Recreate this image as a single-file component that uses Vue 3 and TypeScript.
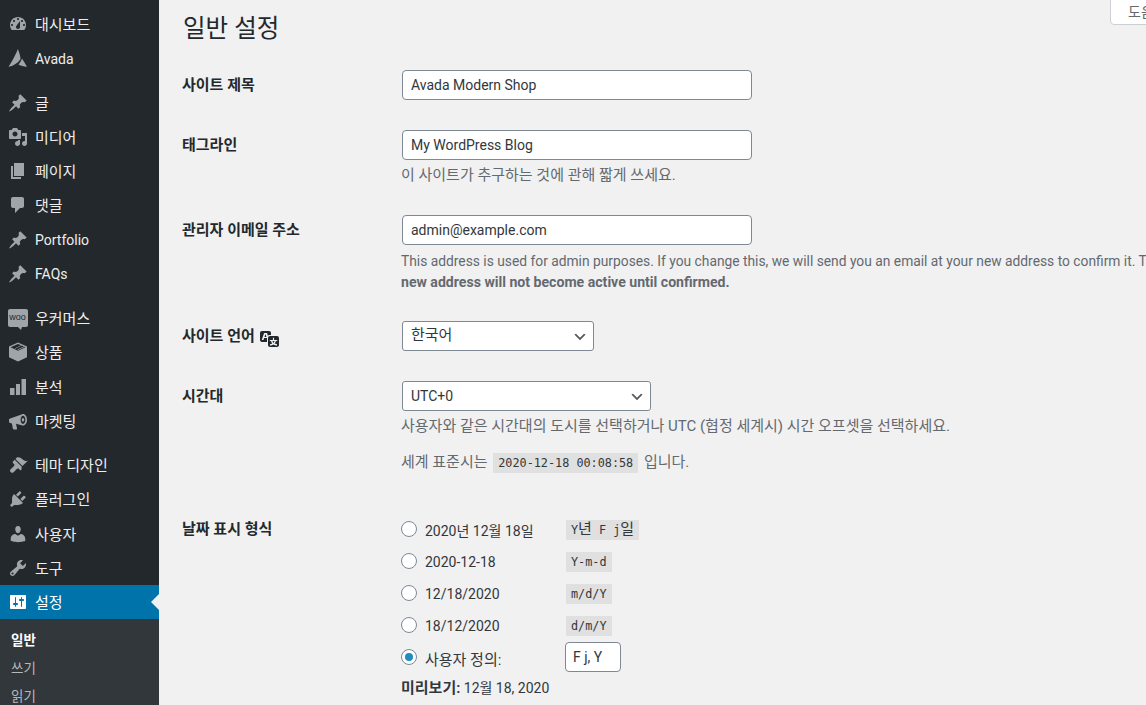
<template>
  <div class="page">
    <nav class="sidebar">
      <template v-for="item in menu" :key="item.label">
        <div class="menu-item" :class="{ active: item.active, spaced: item.spaced }">
          <span class="menu-icon">
            <span v-if="item.icon === 'woo'" class="woo-icon"><span>woo</span></span>
            <svg v-else viewBox="0 0 20 20" width="20" height="20">
              <path fill-rule="evenodd" :d="icons[item.icon]" />
            </svg>
          </span>
          <span class="menu-label" :class="isKorean(item.label) ? 'ko' : 'latin'">{{ item.label }}</span>
        </div>
      </template>
      <div class="submenu">
        <div v-for="(sub, i) in submenu" :key="sub" class="sub-item" :class="{ current: i === 0 }">{{ sub }}</div>
      </div>
    </nav>

    <main class="content">
      <div class="help-tab">도움말</div>
      <h1>일반 설정</h1>

      <div class="form-row">
        <label>사이트 제목</label>
        <div><input class="text-input" type="text" value="Avada Modern Shop" /></div>
      </div>

      <div class="form-row">
        <label>태그라인</label>
        <div>
          <input class="text-input" type="text" value="My WordPress Blog" />
          <p class="description ko">이 사이트가 추구하는 것에 관해 짧게 쓰세요.</p>
        </div>
      </div>

      <div class="form-row email-row">
        <label>관리자 이메일 주소</label>
        <div>
          <input class="text-input" type="text" value="admin@example.com" />
          <p class="description wide">
            This address is used for admin purposes. If you change this, we will send you an email at your new address to confirm it. The<br />
            <strong>new address will not become active until confirmed.</strong>
          </p>
        </div>
      </div>

      <div class="form-row">
        <label class="with-icon">사이트 언어
          <svg viewBox="0 0 20 20" width="20" height="20"><path fill-rule="evenodd" :d="icons.translation" /></svg>
        </label>
        <div><select class="select lang ko"><option>한국어</option></select></div>
      </div>

      <div class="form-row">
        <label>시간대</label>
        <div>
          <select class="select tz"><option>UTC+0</option></select>
          <p class="description ko">사용자와 같은 시간대의 도시를 선택하거나 UTC (협정 세계시) 시간 오프셋을 선택하세요.</p>
          <p class="description ko utc">세계 표준시는 <code>2020-12-18 00:08:58</code> 입니다.</p>
        </div>
      </div>

      <div class="form-row date-row">
        <label>날짜 표시 형식</label>
        <div class="date-options">
          <div v-for="opt in dateOptions" :key="opt.text" class="date-option">
            <input type="radio" name="date" class="radio" />
            <span class="date-text">{{ opt.text }}</span>
            <code><span v-for="part in splitHangul(opt.format)" :key="part" :class="{ 'code-ko': isKorean(part) }">{{ part }}</span></code>
          </div>
          <div class="date-option custom">
            <input type="radio" name="date" class="radio" checked />
            <span class="date-text ko">사용자 정의:</span>
            <input class="text-input small" type="text" value="F j, Y" />
          </div>
          <p class="preview"><strong class="ko">미리보기:</strong> 12월 18, 2020</p>
        </div>
      </div>
    </main>
  </div>
</template>

<script setup lang="ts">
interface MenuItem {
  label: string
  icon: string
  spaced?: boolean
  active?: boolean
}

const pin = 'M10.44 3.02l1.82-1.82 6.36 6.35-1.83 1.82c-1.05-.68-2.48-.57-3.41.36l-.75.75c-.92.93-1.04 2.35-.35 3.41l-1.83 1.82-2.41-2.41-2.8 2.79c-.42.42-3.38 2.71-3.8 2.29s1.86-3.39 2.28-3.81l2.79-2.79L4.1 9.36l1.83-1.82c1.05.69 2.48.57 3.4-.36l.75-.75c.93-.92 1.05-2.35.36-3.41z'

const icons: Record<string, string> = {
  dashboard: 'M3.76 16h12.48c1.1-1.37 1.76-3.11 1.76-5 0-4.42-3.58-8-8-8s-8 3.58-8 8c0 1.89.66 3.63 1.76 5zM10 4c.55 0 1 .45 1 1s-.45 1-1 1-1-.45-1-1 .45-1 1-1zM6 6c.55 0 1 .45 1 1s-.45 1-1 1-1-.45-1-1 .45-1 1-1zm8 0c.55 0 1 .45 1 1s-.45 1-1 1-1-.45-1-1 .45-1 1-1zm-5.37 5.55L12 7v6c0 1.1-.9 2-2 2s-2-.9-2-2c0-.57.24-1.08.63-1.45zM4 10c.55 0 1 .45 1 1s-.45 1-1 1-1-.45-1-1 .45-1 1-1zm12 0c.55 0 1 .45 1 1s-.45 1-1 1-1-.45-1-1 .45-1 1-1z',
  avada: 'M9.800 1C8.500 5 5 12 .5 18.800 5 18 9.500 15.500 12.300 11.500 13 10.300 11.500 5 9.800 1zM14 10.500C13 13 11.800 15 10.500 16.500 13 17.800 16 18.600 19 18.800 17.500 16 15.500 13 14 10.500z',
  pin,
  media: 'M13 11V4c0-.55-.45-1-1-1h-1.67L9 1H5L3.67 3H2c-.55 0-1 .45-1 1v7c0 .55.45 1 1 1h10c.55 0 1-.45 1-1zM7 4.5c1.38 0 2.5 1.12 2.5 2.5S8.38 9.5 7 9.5 4.5 8.38 4.5 7 5.62 4.5 7 4.5zM14 6h5v10.5c0 1.38-1.12 2.5-2.5 2.5S14 17.88 14 16.5s1.12-2.5 2.5-2.5c.17 0 .34.02.5.05V9h-3V6zm-4 8.05V13h2v3.5c0 1.38-1.12 2.5-2.5 2.5S7 17.88 7 16.5 8.12 14 9.5 14c.17 0 .34.02.5.05z',
  page: 'M6 15V2h10v13H6zm-1 1h8v2H3V5h2v11z',
  comments: 'M5 2h9c1.1 0 2 .9 2 2v7c0 1.1-.9 2-2 2h-2l-5 5v-5H5c-1.1 0-2-.9-2-2V4c0-1.1.9-2 2-2z',
  product: 'M10 .5l8.500 3.800c.3.1.5.4.5.7v9.800c0 .3-.2.6-.5.7L10 19.500 1.500 15.500c-.3-.1-.5-.4-.5-.7V5c0-.3.2-.6.5-.7zM2.500 5.200L10 8.800l7.500-3.600-.9-.4-6.600 3.100-.7-.3 6.500-3.100-2-.9L7.300 6.700l-.7-.3 6.500-3.100L10 1.900z',
  analytics: 'M18 18V2h-4.500v16H18zm-6 0V7H8v11h4zm-5.500 0v-7H2v7h4.500z',
  marketing: 'M15 3c2.300 0 4 2.600 4 5.800s-1.700 5.800-4 5.800c-.5 0-1-.1-1.400-.4L8 12.800l1 4.700c.1.500-.2 1-.8 1H5.800c-.4 0-.8-.3-.9-.7l-1-5.300-1.800-.5C1.400 11.800 1 11.100 1 10.400V9c0-.7.4-1.300 1.100-1.500L13.600 3.400c.4-.3.9-.4 1.400-.4zM15 4.700c-1.300 0-2.400 1.800-2.400 4.100s1.100 4.100 2.400 4.100 2.400-1.800 2.400-4.100-1.100-4.100-2.400-4.100zM15 7c.7 0 1.200.8 1.200 1.800s-.5 1.800-1.200 1.800-1.200-.8-1.200-1.800.5-1.800 1.200-1.800z',
  appearance: 'M14.48 11.06L7.41 3.99l1.5-1.5c.5-.56 2.3-.47 3.51.32 1.21.8 1.43 1.28 2.91 2.1 1.18.64 2.45 1.26 4.45.85zm-.71.71L6.7 4.7 4.93 6.47c-.39.39-.39 1.02 0 1.41l1.06 1.06c.59.59.59 1.54 0 2.12l-3.53 3.53c-.59.59-.59 1.54 0 2.12l.71.71c.59.59 1.53.59 2.12 0l3.53-3.53c.59-.59 1.54-.59 2.12 0l1.06 1.06c.39.39 1.02.39 1.41 0z',
  plugin: 'M13.11 4.36L9.87 7.6 8 5.73l3.24-3.24c.35-.34 1.05-.2 1.56.32.52.51.66 1.21.31 1.55zm-8 1.77l.91-1.12 9.01 9.01-1.19.84c-.71.71-2.63 1.16-3.82 1.16H6.14L4.9 17.26c-.59.59-1.54.59-2.12 0-.59-.58-.59-1.53 0-2.12l1.24-1.24v-3.88c0-1.13.4-3.19 1.09-3.89zm7.26 3.97l3.24-3.24c.34-.35 1.04-.21 1.55.31.52.51.66 1.21.31 1.55l-3.24 3.25z',
  users: 'M10 9.25c-2.27 0-2.73-3.44-2.73-3.44C7 4.02 7.82 2 9.97 2c2.16 0 2.98 2.02 2.71 3.81 0 0-.41 3.44-2.68 3.44zm0 2.57L12.72 10c2.39 0 4.52 2.33 4.52 4.53v2.49s-3.65 1.13-7.24 1.13c-3.65 0-7.24-1.13-7.24-1.13v-2.49c0-2.25 1.94-4.48 4.47-4.48z',
  tools: 'M16.68 9.77c-1.34 1.34-3.3 1.67-4.95.99l-5.41 6.52c-.99.99-2.59.99-3.58 0s-.99-2.59 0-3.57l6.52-5.42c-.68-1.65-.35-3.61.99-4.95 1.28-1.28 3.12-1.62 4.72-1.06l-2.89 2.89 2.82 2.82 2.86-2.87c.53 1.58.18 3.39-1.08 4.67zM3.81 16.21c.4.39 1.04.39 1.43 0 .4-.4.4-1.04 0-1.43-.39-.4-1.03-.4-1.43 0-.39.39-.39 1.03 0 1.43z',
  settings: 'M18 16V4c0-.55-.45-1-1-1H3c-.55 0-1 .45-1 1v12c0 .55.45 1 1 1h14c.55 0 1-.45 1-1zM8 11h1c.55 0 1 .45 1 1s-.45 1-1 1H8v1.5c0 .28-.22.5-.5.5s-.5-.22-.5-.5V13H6c-.55 0-1-.45-1-1s.45-1 1-1h1V5.5c0-.28.22-.5.5-.5s.5.22.5.5V11zm5-2h-1c-.55 0-1-.45-1-1s.45-1 1-1h1V5.5c0-.28.22-.5.5-.5s.5.22.5.5V7h1c.55 0 1 .45 1 1s-.45 1-1 1h-1v5.5c0 .28-.22.5-.5.5s-.5-.22-.5-.5V9z',
  translation: 'M11 7H9.49c-.63 0-1.25.3-1.59.7L7 5H4.13l-2.39 7h1.69l.74-2H7v4H2c-1.1 0-2-.9-2-2V5c0-1.1.9-2 2-2h7c1.1 0 2 .9 2 2v2zM6.51 9H4.49l1-2.93zM10 8h7c1.1 0 2 .9 2 2v7c0 1.1-.9 2-2 2h-7c-1.1 0-2-.9-2-2v-7c0-1.1.9-2 2-2zm7.25 5v-1.08h-3.17V9.75h-1.16v2.17H9.75V13h1.28c.11.85.56 1.85 1.28 2.62-.87.36-1.89.62-2.31.62-.01.02.22.97.2 1.46.84 0 2.21-.5 3.28-1.15 1.09.65 2.48 1.15 3.34 1.15-.02-.49.2-1.44.2-1.46-.43 0-1.49-.27-2.38-.63.7-.77 1.14-1.77 1.25-2.61h1.36zm-3.81 1.93c-.5-.46-.85-1.13-1.01-1.93h2.09c-.17.8-.51 1.47-1 1.93l-.04.03s-.03-.02-.04-.03z'
}

const menu: MenuItem[] = [
  { label: '대시보드', icon: 'dashboard' },
  { label: 'Avada', icon: 'avada' },
  { label: '글', icon: 'pin', spaced: true },
  { label: '미디어', icon: 'media' },
  { label: '페이지', icon: 'page' },
  { label: '댓글', icon: 'comments' },
  { label: 'Portfolio', icon: 'pin' },
  { label: 'FAQs', icon: 'pin' },
  { label: '우커머스', icon: 'woo', spaced: true },
  { label: '상품', icon: 'product' },
  { label: '분석', icon: 'analytics' },
  { label: '마켓팅', icon: 'marketing' },
  { label: '테마 디자인', icon: 'appearance', spaced: true },
  { label: '플러그인', icon: 'plugin' },
  { label: '사용자', icon: 'users' },
  { label: '도구', icon: 'tools' },
  { label: '설정', icon: 'settings', active: true }
]

const submenu = ['일반', '쓰기', '읽기', '토론']

const dateOptions = [
  { text: '2020년 12월 18일', format: 'Y년 F j일' },
  { text: '2020-12-18', format: 'Y-m-d' },
  { text: '12/18/2020', format: 'm/d/Y' },
  { text: '18/12/2020', format: 'd/m/Y' }
]

const isKorean = (text: string) => /[가-힣]/.test(text)

// Hangul sits larger than the mono latin inside the format chips
const splitHangul = (text: string) => text.split(/([가-힣]+)/).filter(Boolean)
</script>

<style>
html, body {
  margin: 0;
  height: 705px;
  overflow: hidden;
  background: #f1f1f1;
}
</style>

<style scoped>
.page {
  display: flex;
  width: 1146px;
  height: 705px;
  overflow: hidden;
  background: #f1f1f1;
  font-family: Roboto, "Noto Sans CJK KR", sans-serif;
  font-size: 14px;
  color: #32373c;
}

.ko {
  font-size: 15px;
}

.sidebar {
  flex: 0 0 159px;
  height: 705px;
  padding-top: 7px;
  box-sizing: border-box;
  background: #23282d;
  overflow: hidden;
}

.menu-item {
  position: relative;
  display: flex;
  align-items: center;
  height: 34.2px;
  color: #eee;
}

.menu-item.spaced {
  margin-top: 10.3px;
}

.menu-item.active {
  background: #0073aa;
  color: #fff;
}

.menu-item.active::after {
  content: "";
  position: absolute;
  right: 0;
  top: 50%;
  margin-top: -8px;
  border: 8px solid transparent;
  border-right-color: #f1f1f1;
  border-left-width: 0;
}

.menu-icon {
  flex: 0 0 35px;
  display: flex;
  justify-content: center;
}

.menu-icon svg {
  display: block;
  fill: #a0a5aa;
}

.menu-item.active .menu-icon svg {
  fill: #fff;
}

.woo-icon {
  display: flex;
  align-items: center;
  justify-content: center;
  position: relative;
  width: 20px;
  height: 18px;
  margin-top: -1px;
  border-radius: 2px;
  background: #a0a5aa;
}

.woo-icon::after {
  content: "";
  position: absolute;
  left: 10px;
  bottom: -3px;
  border-top: 3px solid #a0a5aa;
  border-left: 3px solid transparent;
  border-right: 1px solid transparent;
}

.woo-icon span {
  font-size: 9px;
  line-height: 1;
  font-weight: 400;
  color: #23282d;
  font-family: "Liberation Sans", sans-serif;
}

.menu-label {
  white-space: nowrap;
}

.menu-label.ko {
  padding-bottom: 1px;
}

.menu-label.latin {
  padding-top: 1px;
}

.submenu {
  padding: 7px 0;
  background: #32373c;
}

.sub-item {
  height: 28px;
  line-height: 28px;
  padding-left: 11px;
  font-size: 13.5px;
  color: #b4b9be;
}

.sub-item.current {
  color: #fff;
  font-weight: 600;
}

.content {
  position: relative;
  flex: 1;
  min-width: 0;
  padding-left: 23px;
  overflow: hidden;
}

.help-tab {
  position: absolute;
  top: -1px;
  left: 951px;
  width: 100px;
  height: 26px;
  box-sizing: border-box;
  padding: 2px 0 0 17px;
  background: #fff;
  border: 1px solid #ccd0d4;
  border-radius: 0 0 4px 4px;
  font-size: 14px;
  line-height: 20px;
  color: #646970;
}

h1 {
  margin: 0;
  padding: 11px 0 0 1px;
  height: 60px;
  box-sizing: border-box;
  font-size: 24.5px;
  font-weight: 400;
  line-height: 36px;
  color: #23282d;
}

.form-row {
  display: flex;
  padding: 10px 0 20px;
}

.email-row {
  padding-bottom: 18px;
}

.form-row > label {
  flex: 0 0 220px;
  font-size: 15px;
  font-weight: 600;
  line-height: 30px;
  color: #23282d;
  white-space: nowrap;
}

.with-icon {
  display: flex;
  align-items: center;
  gap: 5px;
}

.with-icon svg {
  fill: #23282d;
  margin-top: 4px;
}

.text-input {
  display: block;
  width: 350px;
  height: 30px;
  box-sizing: border-box;
  padding: 0 8px;
  border: 1px solid #7e8993;
  border-radius: 4px;
  background: #fff;
  font: inherit;
  color: #32373c;
}

.select {
  display: block;
  height: 30px;
  box-sizing: border-box;
  padding: 0 24px 0 8px;
  border: 1px solid #7e8993;
  border-radius: 3px;
  appearance: none;
  background: #fff url("data:image/svg+xml,%3Csvg xmlns='http://www.w3.org/2000/svg' width='20' height='20' viewBox='0 0 20 20'%3E%3Cpath d='M5 6l5 5 5-5 2 1-7 7-7-7z' fill='%23555'/%3E%3C/svg%3E") no-repeat right 5px top 55%;
  background-size: 16px 16px;
  font-family: inherit;
  font-size: 14px;
  color: #32373c;
}

.select.ko {
  font-size: 15px;
  padding-bottom: 2px;
}

.select.lang {
  width: 192px;
}

.select.tz {
  width: 249px;
}

.description {
  margin: 5px 0 0 -1px;
  line-height: 20px;
  color: #646970;
  white-space: nowrap;
}

.description.wide {
  margin-top: 6px;
  line-height: 21px;
  font-size: 13.8px;
}

.description.utc {
  margin-top: 16px;
}

code {
  margin: 0 2px;
  padding: 3px 5px;
  background: rgba(0, 0, 0, 0.07);
  font-family: "DejaVu Sans Mono", "Noto Sans CJK KR", monospace;
  font-size: 11.8px;
  color: #32373c;
}

.code-ko {
  font-size: 15px;
  line-height: 1;
}

.date-row {
  padding-top: 21px;
}

.date-options {
  margin-top: -1px;
}

.date-option {
  display: flex;
  align-items: center;
  height: 32px;
}

.date-option code {
  margin: 2px 0 0;
  padding: 2px 5px;
  line-height: 16px;
}

.date-text {
  width: 141px;
  flex: none;
  padding-top: 2px;
  white-space: nowrap;
}

.radio {
  appearance: none;
  flex: none;
  width: 16px;
  height: 16px;
  margin: 0 8px 0 -1px;
  box-sizing: border-box;
  border: 1px solid #7e8993;
  border-radius: 50%;
  background: #fff;
  position: relative;
}

.radio:checked::before {
  content: "";
  position: absolute;
  left: 3px;
  top: 3px;
  width: 8px;
  height: 8px;
  border-radius: 50%;
  background: #1e8cbe;
}

.text-input.small {
  width: 56px;
  height: 30px;
  margin-left: -1px;
  padding: 0 7px;
}

.preview {
  margin: 5px 0 0 -1px;
  line-height: 21px;
  white-space: nowrap;
}

strong {
  font-weight: 600;
}

.description strong {
  font-size: 14.1px;
  font-weight: 700;
}
</style>
